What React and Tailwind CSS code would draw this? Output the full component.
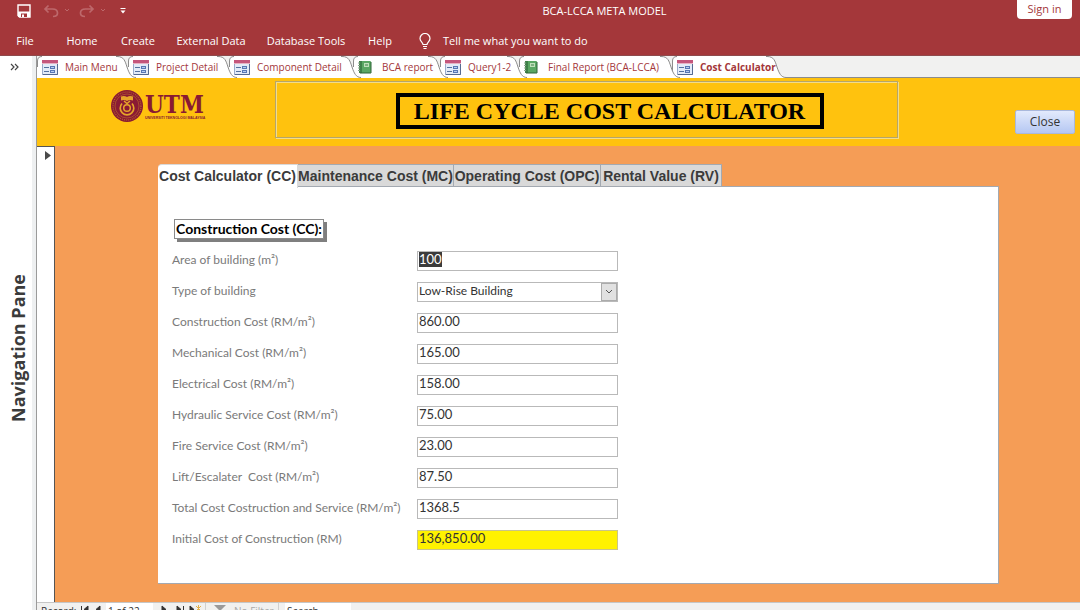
import { useEffect, useRef } from "react";

const ui = "font-['Open_Sans','Noto_Sans',sans-serif]";

const menus = [
  { name: "File", cls: "w-[50px]" },
  { name: "Home", cls: "w-16" },
  { name: "Create", cls: "w-12" },
  { name: "External Data", cls: "w-[98px]" },
  { name: "Database Tools", cls: "w-[92px]" },
  { name: "Help", cls: "w-14" },
];

const docs = [
  { name: "Main Menu", kind: "form", cls: "w-[91px]" },
  { name: "Project Detail", kind: "form", cls: "w-[101px]" },
  { name: "Component Detail", kind: "form", cls: "w-[124px]" },
  { name: "BCA report", kind: "report", cls: "w-[87px]" },
  { name: "Query1-2", kind: "form", cls: "w-[79px]" },
  { name: "Final Report (BCA-LCCA)", kind: "report", cls: "w-[153px]" },
  { name: "Cost Calculator", kind: "form", cls: "w-[106px]", active: true },
];

const pages = [
  { name: "Cost Calculator (CC)", cls: "w-[140px]", active: true },
  { name: "Maintenance Cost (MC)", cls: "w-[156px]" },
  { name: "Operating Cost (OPC)", cls: "w-[147px]" },
  { name: "Rental Value (RV)", cls: "w-[121px]" },
];

const fields = [
  { id: "area", label: "Area of building (m²)", value: "100" },
  { id: "type", label: "Type of building", value: "Low-Rise Building", select: true },
  { id: "construction", label: "Construction Cost (RM/m²)", value: "860.00" },
  { id: "mechanical", label: "Mechanical Cost (RM/m²)", value: "165.00" },
  { id: "electrical", label: "Electrical Cost (RM/m²)", value: "158.00" },
  { id: "hydraulic", label: "Hydraulic Service Cost (RM/m²)", value: "75.00" },
  { id: "fire", label: "Fire Service Cost (RM/m²)", value: "23.00" },
  { id: "lift", label: "Lift/Escalater  Cost (RM/m²)", value: "87.50" },
  { id: "total", label: "Total Cost Costruction and Service (RM/m²)", value: "1368.5" },
  { id: "initial", label: "Initial Cost of Construction (RM)", value: "136,850.00", highlight: true },
];

function FormIcon() {
  return (
    <svg width="16" height="15" viewBox="0 0 16 15" className="shrink-0" aria-hidden="true">
      <rect x="0.5" y="0.5" width="15" height="14" fill="#e3ebf8" stroke="#9aaaca" />
      <rect x="0" y="0" width="16" height="3" fill="#c4567c" />
      <rect x="0" y="3" width="16" height="1" fill="#e7b2c4" />
      <path d="M2 7.500h5M2 11.500h5" stroke="#55719f" />
      <rect x="8.500" y="6.500" width="4" height="2" fill="#b9cdf0" stroke="#5877b4" />
      <rect x="8.500" y="10.500" width="4" height="2" fill="#b9cdf0" stroke="#5877b4" />
      <path d="M15.500 4v10.500H1" stroke="#566a91" fill="none" />
    </svg>
  );
}

function ReportIcon() {
  return (
    <svg width="14" height="14" viewBox="0 0 14 14" className="shrink-0" aria-hidden="true">
      <rect x="1" y="1" width="12" height="12" rx="1" fill="#5aa763" />
      <rect x="1" y="1" width="3" height="12" fill="#3f8149" />
      <path d="M0 3h2M0 5.500h2M0 8h2M0 10.500h2" stroke="#8aa58d" />
      <rect x="6" y="3" width="5" height="4" fill="#bfe0b9" />
      <path d="M7 5h3" stroke="#3d7f49" />
      <path d="M13 2v11H2" stroke="#2c6237" fill="none" />
    </svg>
  );
}

function TitleBar() {
  return (
    <div className="flex h-[26px] items-start pr-2">
      <div className="flex flex-1 items-center pl-[17px] pt-1">
        <button aria-label="Save">
          <svg width="14" height="14" viewBox="0 0 14 14">
            <path d="M1 1h12v12H2.500L1 11.500z" fill="none" stroke="#fff" strokeWidth="1.400" />
            <path d="M1 7.500h12V13H1z" fill="#fff" />
            <path d="M4 9.500h6V13H4z" fill="#a4373a" />
            <path d="M5 10.500h2V13H5z" fill="#fff" />
          </svg>
        </button>
        <button aria-label="Undo" className="ml-3">
          <svg width="28" height="14" viewBox="0 0 28 14" fill="none" stroke="#bd686b" strokeWidth="1.700">
            <path d="M5.500 1.500L2 5l3.500 3.500M2 5h7.500c3 0 5 1.600 5 4s-2 3.500-4.500 3.500" />
            <path d="M22 5l2 2 2-2" strokeWidth="1" />
          </svg>
        </button>
        <button aria-label="Redo" className="ml-2">
          <svg width="28" height="14" viewBox="0 0 28 14" fill="none" stroke="#bd686b" strokeWidth="1.700">
            <path d="M10.500 1.500L14 5l-3.500 3.500M14 5H6.500c-3 0-5 1.600-5 4s2 3.500 4.500 3.500" />
            <path d="M22 5l2 2 2-2" strokeWidth="1" />
          </svg>
        </button>
        <button aria-label="Customize toolbar" className="ml-[13px]">
          <svg width="6" height="6" viewBox="0 0 6 6">
            <path d="M0.500 0.500h5" stroke="#fff" />
            <path d="M0.500 2.500h5L3 5.500z" fill="#fff" />
          </svg>
        </button>
      </div>
      <h1 className="mt-0.5 pl-[120px] text-[11px] leading-[18px]">BCA-LCCA META MODEL</h1>
      <div className="flex flex-1 justify-end">
        <button className="h-[19px] w-[55px] rounded-b-sm bg-white text-[11px] text-[#a4373a]">Sign in</button>
      </div>
    </div>
  );
}

function MenuBar() {
  return (
    <nav className="flex h-[30px] items-center border-b border-[#8f4a4c] pt-0.5 text-[11px]">
      {menus.map((m) => (
        <button key={m.name} className={`whitespace-nowrap text-center ${m.cls}`}>{m.name}</button>
      ))}
      <button className="ml-[11px] flex items-center gap-3 whitespace-nowrap text-[11px]">
        <svg width="12" height="17" viewBox="0 0 12 17" fill="none" stroke="#fff" strokeWidth="1.200">
          <path d="M4 11.500c0-2-3-3-3-6a5 5 0 0 1 10 0c0 3-3 4-3 6z" />
          <path d="M4 13.500h4M4.500 15.500h3" />
        </svg>
        Tell me what you want to do
      </button>
    </nav>
  );
}

function DocTab({ doc }) {
  return (
    <button
      className={`relative flex h-[22px] shrink-0 items-center whitespace-nowrap bg-white pl-[5px] text-[10px] text-[#a4373a] ${doc.cls}`}
    >
      <svg className="absolute left-0 top-0" width="5" height="22" viewBox="0 0 5 22" fill="none" aria-hidden="true">
        <path d="M0 0h4Q0 1 0 5z" fill="#f1f1f0" />
        <path d={doc.active ? "M5 .5Q.5 .5 .5 5V22" : "M5 .5Q.5 .5 .5 5v6"} stroke="#8c8c8c" />
      </svg>
      <svg
        className="absolute -right-2 top-0 z-10"
        width="20"
        height="22"
        viewBox="0 0 20 22"
        aria-hidden="true"
      >
        <path d="M0 0H12V12H0z" fill="#f1f1f0" />
        <path d="M0 0H1C8 .5 9 5 11 11S15 21.500 20 21.500V22H0z" fill="#fff" />
        <path d="M0 .5H1C8 .5 9 5 11 11S15 21.500 20 21.500" fill="none" stroke="#8c8c8c" />
      </svg>
      <span className="relative z-20 flex items-center">
        <span className={`flex ${doc.kind === "form" ? "w-[23px]" : "w-6"}`}>
          {doc.kind === "form" ? <FormIcon /> : <ReportIcon />}
        </span>
        <span className={doc.active ? "font-bold" : ""}>{doc.name}</span>
      </span>
    </button>
  );
}

function Logo() {
  return (
    <svg width="98" height="34" viewBox="0 0 98 34" role="img" aria-label="UTM Universiti Teknologi Malaysia">
      <circle cx="17" cy="17" r="16" fill="#8a1a33" />
      <circle cx="17" cy="17" r="14" fill="none" stroke="#b8662c" strokeWidth="1.200" strokeDasharray="1 1" />
      <circle cx="17" cy="17" r="12" fill="none" stroke="#c9812a" strokeWidth="0.500" />
      <path d="M11 7.500q3.500-1 6 .5 2.500-1.500 6-.5v4q-3.500-1-6 .5-2.500-1.500-6-.5z" fill="#e5a52a" />
      <path d="M14 12l3 2.500 3-2.500" stroke="#e5a52a" strokeWidth="1.500" fill="none" />
      <path d="M12 14.500a6.800 6.800 0 1 0 10 0" stroke="#e5a52a" strokeWidth="1.700" fill="none" />
      <circle cx="17" cy="19" r="3.300" stroke="#e5a52a" strokeWidth="1.500" fill="none" />
      <text x="35" y="24" fontSize="24" fontWeight="bold" fontFamily="'DejaVu Serif Condensed', 'DejaVu Serif', serif" fill="#8a1a33">UTM</text>
      <text x="35" y="30" fontSize="3.500" fontWeight="bold" fontFamily="'Liberation Sans', sans-serif" fill="#8a1a33">UNIVERSITI TEKNOLOGI MALAYSIA</text>
    </svg>
  );
}

function FormHeader() {
  return (
    <header className="flex h-[68px] shrink-0 items-start bg-[#ffc20e] pr-[5px]">
      <div className="w-[238px] shrink-0 pl-[73px] pt-[11px]">
        <Logo />
      </div>
      <div className="mt-[3px] flex h-[57px] w-[623px] items-start justify-center border border-[#b5a56a] pl-[46px] pt-[11px] shadow-[inset_1px_1px_0_#f3dc8a,1px_1px_0_#f3dc8a]">
        <h2 className="flex h-9 w-[428px] items-center justify-center whitespace-nowrap border-4 border-black font-['Liberation_Serif',serif] text-[24px] font-bold text-black">
          LIFE CYCLE COST CALCULATOR
        </h2>
      </div>
      <button className="ml-auto mt-8 h-6 w-[60px] rounded-xs border border-[#a9b8dc] bg-linear-to-b from-[#e3eafc] to-[#b5c7f2] text-[12px] text-[#333]">
        Close
      </button>
    </header>
  );
}

function Field({ field, inputRef }) {
  const box = "block h-5 w-full rounded-none border px-px pb-[3px] leading-4 text-[#333] outline-none";
  return (
    <div className="flex h-[31px] items-center">
      <label htmlFor={field.id} className="w-[245px] shrink-0 whitespace-pre pb-0.5 text-[12px] text-[#7a7a7a]">
        {field.label}
      </label>
      <div className="relative w-[201px]">
        {field.select ? (
          <>
            <select id={field.id} className={`${box} appearance-none border-[#b9b9b9] bg-white text-[12px]`}>
              <option>{field.value}</option>
            </select>
            <span className="pointer-events-none absolute bottom-px right-px top-px flex w-4 items-center justify-center border border-[#ababab] bg-[#e1e1e1]">
              <svg width="8" height="6" viewBox="0 0 8 6" fill="none" stroke="#555">
                <path d="M1 1l3 3 3-3" />
              </svg>
            </span>
          </>
        ) : (
          <input
            id={field.id}
            ref={inputRef}
            type="text"
            defaultValue={field.value}
            className={`${box} text-[13px] selection:bg-[#3b3b3b] selection:text-white ${field.highlight ? "border-[#c9c48a] bg-[#fff200]" : "border-[#b9b9b9] bg-white"}`}
          />
        )}
      </div>
    </div>
  );
}

function Calculator() {
  const first = useRef(null);
  useEffect(() => {
    first.current.focus();
    first.current.select();
  }, []);
  return (
    <main className="flex min-h-0 flex-1 flex-col bg-[#f59d56] pb-[18px] pl-[103px] pr-[81px] pt-[18px]">
      <div className="flex h-[23px] shrink-0 font-['Liberation_Sans',sans-serif] text-[14px] font-bold text-[#3b3b3b]" role="tablist">
        {pages.map((p) => (
          <button
            key={p.name}
            role="tab"
            aria-selected={!!p.active}
            className={`whitespace-nowrap border-r border-t text-center ${p.cls} ${
              p.active ? "z-10 -mb-px rounded-tl-sm border-[#d9d9d9] bg-white" : "border-[#a3a9b1] bg-[#d9d9d9]"
            }`}
          >
            {p.name}
          </button>
        ))}
      </div>
      <section className="-mt-px flex-1 border-b border-r border-t border-[#a3a9b1] bg-white pl-[14px] pt-7 font-['Lato',sans-serif]">
        <h3 className="ml-0.5 mt-1 block h-5 w-[150px] whitespace-nowrap border border-[#8a8a8a] text-center text-[14px] font-bold leading-[18px] text-black shadow-[3px_3px_0_#7f7f7f]">
          Construction Cost (CC):
        </h3>
        <form className="mt-1.5">
          {fields.map((f, i) => (
            <Field key={f.id} field={f} inputRef={i === 0 ? first : undefined} />
          ))}
        </form>
      </section>
    </main>
  );
}

function NavArrow({ label, d, star }) {
  return (
    <button aria-label={label}>
      <svg width="13" height="12" viewBox="0 0 13 12" fill="#333" stroke="#333">
        <path d={d} strokeWidth="1" />
        {star && <path d="M7 3l5 5M12 3l-5 5M9.500 2v7" stroke="#e3b04b" fill="none" />}
      </svg>
    </button>
  );
}

function StatusBar() {
  return (
    <footer className="flex h-2 shrink-0 items-start overflow-hidden border-t border-[#c6c6c6] bg-[#f1f1f0] text-[10px] leading-4 text-[#333]">
      <span className="w-[42px] shrink-0 pl-1">Record:</span>
      <span className="flex w-[27px] shrink-0 items-start gap-px">
        <NavArrow label="First record" d="M2.500 3v7M9 3L5 6.500L9 10z" />
        <NavArrow label="Previous record" d="M7 3L3 6.500L7 10z" />
      </span>
      <input aria-label="Current record" defaultValue="1 of 22" className="h-4 w-[47px] bg-white px-0.5" />
      <span className="flex w-[53px] shrink-0 items-start gap-0.5 border-r border-[#d0d0d0] pl-1.5">
        <NavArrow label="Next record" d="M3 3L7 6.500L3 10z" />
        <NavArrow label="Last record" d="M3 3L7 6.500L3 10zM9.500 3v7" />
        <NavArrow label="New record" d="M1 3L5 6.500L1 10z" star />
      </span>
      <button className="flex w-[73px] items-start gap-2 border-r border-[#d0d0d0] pl-2 text-[#a8a8a8]">
        <svg className="mt-0.5" width="12" height="10" viewBox="0 0 12 10">
          <path d="M0 0h12L7 5v5H5V5z" fill="#9a9a9a" />
        </svg>
        No Filter
      </button>
      <input aria-label="Search" defaultValue="Search" className="ml-1.5 h-4 w-[66px] bg-white px-0.5" />
    </footer>
  );
}

export default function App() {
  return (
    <div className={`flex h-screen flex-col overflow-hidden bg-white ${ui}`}>
      <div className="shrink-0 bg-[#a4373a] text-white">
        <TitleBar />
        <MenuBar />
      </div>
      <div className="flex min-h-0 flex-1">
        <aside className="flex w-[37px] shrink-0 flex-col items-center border-r border-[#9a9a9a] shadow-[inset_-4px_0_0_#eef0f1]">
          <button aria-label="Open navigation pane" className="mr-2 mt-[7px]">
            <svg width="9" height="8" viewBox="0 0 9 8" fill="none" stroke="#444" strokeWidth="1.200">
              <path d="M1 1l3 3-3 3M5 1l3 3-3 3" />
            </svg>
          </button>
          <span className="mt-[203px] rotate-180 whitespace-nowrap text-[18px] font-bold leading-6 text-[#3b3b3b] [writing-mode:vertical-rl]">
            Navigation Pane
          </span>
        </aside>
        <div className="flex min-w-0 flex-1 flex-col">
          <div className="flex h-[22px] shrink-0 border-b border-[#8c8c8c] bg-[#f1f1f0]">
            {docs.map((d) => (
              <DocTab key={d.name} doc={d} />
            ))}
          </div>
          <FormHeader />
          <div className="flex min-h-0 flex-1">
            <button aria-label="Select record" className="flex w-[18px] shrink-0 items-start justify-center border-r border-t border-[#555] bg-white pl-[5px] pt-1">
              <svg width="6" height="9" viewBox="0 0 6 9">
                <path d="M0 0l6 4.500L0 9z" fill="#4a4a4a" />
              </svg>
            </button>
            <Calculator />
          </div>
          <StatusBar />
        </div>
      </div>
    </div>
  );
}
